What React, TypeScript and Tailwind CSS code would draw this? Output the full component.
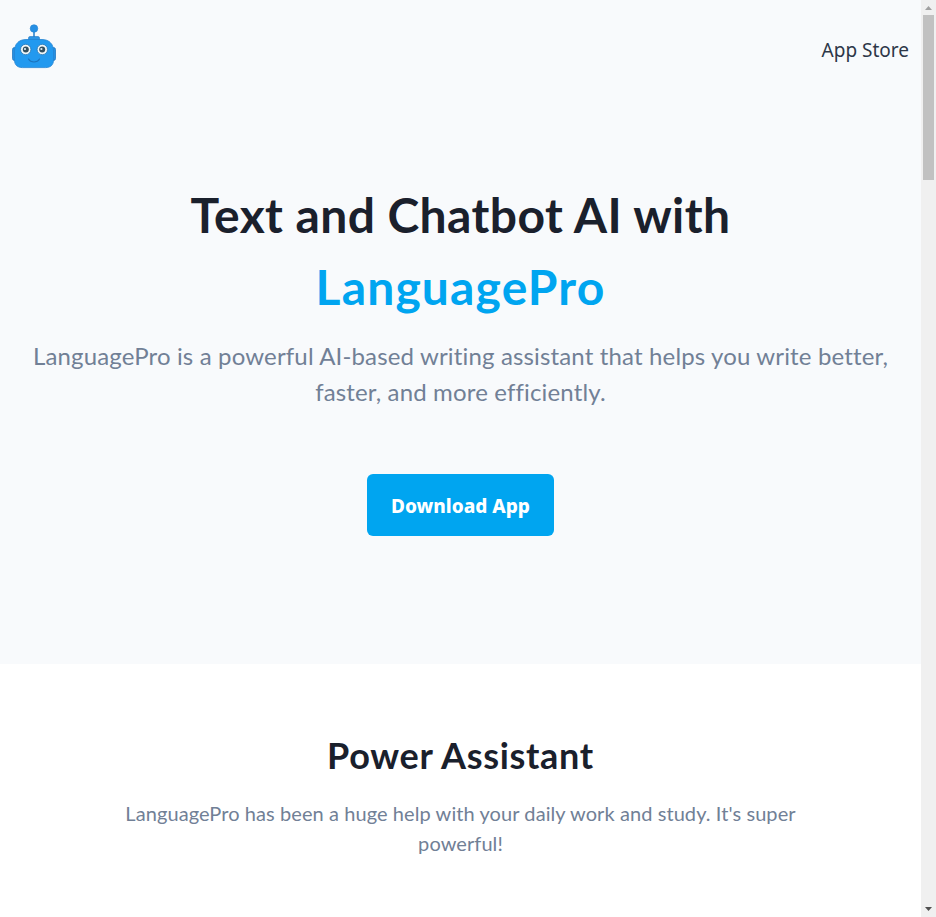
function RobotLogo() {
  return (
    <svg viewBox="0 0 44 46" className="h-[46px] w-11" aria-label="LanguagePro">
      <path d="M22 7v7" stroke="#2f86cf" strokeWidth="1.6" />
      <circle cx="22" cy="5.5" r="3.8" fill="#258fe4" stroke="#2684d2" strokeWidth="0.6" />
      <path d="M16.5 17v-2q0-1.5 1.500-1.500h8q1.500 0 1.500 1.500V17z" fill="#2c94e4" stroke="#2379c2" strokeWidth="0.6" />
      <rect x="0.5" y="24.500" width="6" height="13" rx="2" fill="#2590e3" stroke="#2379c2" strokeWidth="0.8" />
      <rect x="37.500" y="24.500" width="6" height="13" rx="2" fill="#2590e3" stroke="#2379c2" strokeWidth="0.8" />
      <path d="M14 16.500h16c7 0 11.500 4.500 11.500 11.500v9c0 5-3 7.600-8 7.600h-23c-5 0-8-2.600-8-7.600v-9C2.500 21 7 16.500 14 16.500z" fill="#2299ef" stroke="#2684d2" strokeWidth="0.8" />
      <circle cx="13.700" cy="26.500" r="5.200" fill="#f0f7f8" stroke="#2476b5" strokeWidth="0.8" />
      <circle cx="30.300" cy="26.500" r="5.200" fill="#f0f7f8" stroke="#2476b5" strokeWidth="0.8" />
      <circle cx="13.800" cy="26.500" r="3" fill="#34505f" />
      <circle cx="30.200" cy="26.500" r="3" fill="#34505f" />
      <circle cx="13" cy="26" r="1.1" fill="#dceef8" />
      <circle cx="29.400" cy="26" r="1.1" fill="#dceef8" />
      <path d="M16.500 36c2.200 3.900 8.800 3.900 11 0" fill="none" stroke="#1b73bd" strokeWidth="1.1" strokeLinecap="round" />
    </svg>
  );
}

function Scrollbar() {
  return (
    <div className="flex w-[15px] shrink-0 flex-col items-center bg-[#f0f0f0]">
      <svg viewBox="0 0 15 15" className="h-[15px] w-[15px]">
        <path d="M4 10h7L7.500 6z" fill="#a0a0a0" />
      </svg>
      <div className="h-[165px] w-[11px] bg-[#c1c1c1]" />
      <svg viewBox="0 0 15 15" className="mt-auto h-[15px] w-[15px]">
        <path d="M4 5h7L7.500 9z" fill="#505050" />
      </svg>
    </div>
  );
}

export default function App() {
  return (
    <div className="flex h-[917px] w-[936px] overflow-hidden bg-white font-['Lato',sans-serif]">
      <main className="min-w-0 flex-1">
        <section className="h-[664px] bg-[#f8fafc]">
          <header className="flex h-[99px] items-center justify-between px-3">
            <div className="-mt-[7px]">
              <RobotLogo />
            </div>
            <a className="pt-0.5 font-['Noto_Sans',sans-serif] text-[19px] whitespace-nowrap text-[#2d3748]">App Store</a>
          </header>
          <div className="flex flex-col items-center pt-20 text-center">
            <h1 className="text-5xl leading-[72px] font-bold whitespace-nowrap text-[#1a202c]">
              <span className="inline-block tracking-[0.41px]">Text and Chatbot AI with</span>
              <br />
              <span className="inline-block tracking-[1.15px] text-[#00a5f0]">LanguagePro</span>
            </h1>
            <p className="mt-[15px] text-2xl leading-9 tracking-[0.15px] whitespace-nowrap text-[#718096]">
              LanguagePro is a powerful AI-based writing assistant that helps you write better,
              <br />
              faster, and more efficiently.
            </p>
            <button className="mt-16 h-[62px] w-[187px] rounded-md bg-[#00a5f0] pt-[3px] font-['Noto_Sans',sans-serif] text-[19px] font-extrabold whitespace-nowrap text-white">
              Download App
            </button>
          </div>
        </section>
        <section className="flex flex-col items-center pt-16 text-center">
          <h2 className="text-4xl leading-[54px] font-bold tracking-[0.68px] whitespace-nowrap text-[#1a202c]">Power Assistant</h2>
          <p className="mt-4 text-[20px] leading-[30px] tracking-[0.08px] whitespace-nowrap text-[#718096]">
            LanguagePro has been a huge help with your daily work and study. It's super
            <br />
            powerful!
          </p>
        </section>
      </main>
      <Scrollbar />
    </div>
  );
}
